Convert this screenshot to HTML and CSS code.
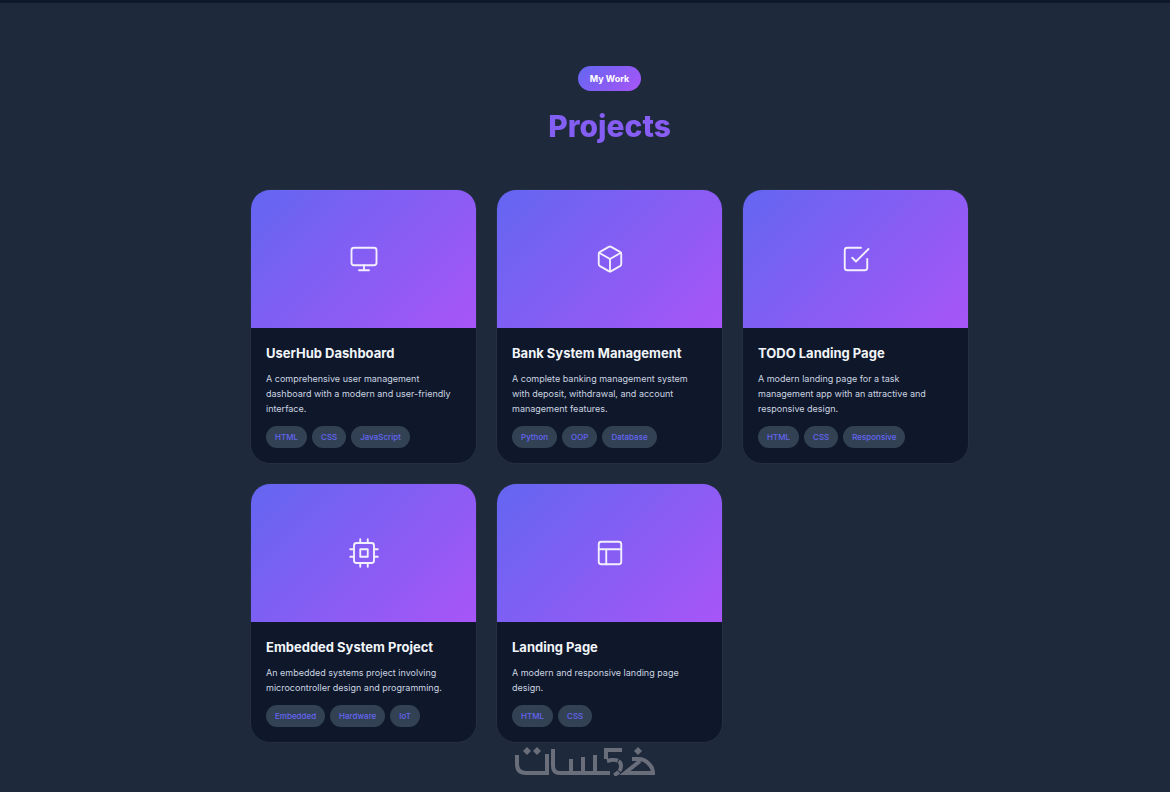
FILE: index.html
```html
<!DOCTYPE html>
<html lang="en">
<head>
<meta charset="utf-8">
<meta name="viewport" content="width=device-width, initial-scale=1">
<title>Projects</title>
<link rel="stylesheet" href="styles.css">
</head>
<body>
<main class="projects">
  <header class="section-header">
    <span class="section-badge">My Work</span>
    <h1 class="section-title">Projects</h1>
  </header>
  <div class="project-grid">
    <article class="card">
      <div class="card-image">
        <svg class="icon" viewBox="0 0 24 24" aria-hidden="true"><rect x="2" y="3" width="20" height="14" rx="2"/><path d="M8 21h8M12 17v4"/></svg>
      </div>
      <div class="card-body">
        <h2 class="card-title">UserHub Dashboard</h2>
        <p class="card-text">A comprehensive user management dashboard with a modern and user-friendly interface.</p>
        <ul class="tags"><li class="tag">HTML</li><li class="tag">CSS</li><li class="tag">JavaScript</li></ul>
      </div>
    </article>
    <article class="card">
      <div class="card-image">
        <svg class="icon" viewBox="0 0 24 24" aria-hidden="true"><path d="M21 16V8a2 2 0 0 0-1-1.73l-7-4a2 2 0 0 0-2 0l-7 4A2 2 0 0 0 3 8v8a2 2 0 0 0 1 1.73l7 4a2 2 0 0 0 2 0l7-4A2 2 0 0 0 21 16z"/><path d="M3.27 6.96 12 12.01l8.73-5.05M12 22.08V12"/></svg>
      </div>
      <div class="card-body">
        <h2 class="card-title">Bank System Management</h2>
        <p class="card-text">A complete banking management system with deposit, withdrawal, and account management features.</p>
        <ul class="tags"><li class="tag">Python</li><li class="tag">OOP</li><li class="tag">Database</li></ul>
      </div>
    </article>
    <article class="card">
      <div class="card-image">
        <svg class="icon" viewBox="0 0 24 24" aria-hidden="true"><path d="m9 11 3 3L22 4"/><path d="M21 12v7a2 2 0 0 1-2 2H5a2 2 0 0 1-2-2V5a2 2 0 0 1 2-2h11"/></svg>
      </div>
      <div class="card-body">
        <h2 class="card-title">TODO Landing Page</h2>
        <p class="card-text">A modern landing page for a task management app with an attractive and responsive design.</p>
        <ul class="tags"><li class="tag">HTML</li><li class="tag">CSS</li><li class="tag">Responsive</li></ul>
      </div>
    </article>
    <article class="card">
      <div class="card-image">
        <svg class="icon" viewBox="0 0 24 24" aria-hidden="true"><rect x="4" y="4" width="16" height="16" rx="2"/><rect x="9" y="9" width="6" height="6"/><path d="M9 1v3M15 1v3M9 20v3M15 20v3M20 9h3M20 15h3M1 9h3M1 15h3"/></svg>
      </div>
      <div class="card-body">
        <h2 class="card-title">Embedded System Project</h2>
        <p class="card-text">An embedded systems project involving microcontroller design and programming.</p>
        <ul class="tags"><li class="tag">Embedded</li><li class="tag">Hardware</li><li class="tag">IoT</li></ul>
      </div>
    </article>
    <article class="card">
      <div class="card-image">
        <svg class="icon" viewBox="0 0 24 24" aria-hidden="true"><rect x="3" y="3" width="18" height="18" rx="2"/><path d="M3 9h18M9 21V9"/></svg>
      </div>
      <div class="card-body">
        <h2 class="card-title">Landing Page</h2>
        <p class="card-text">A modern and responsive landing page design.</p>
        <ul class="tags"><li class="tag">HTML</li><li class="tag">CSS</li></ul>
      </div>
    </article>
  </div>
</main>
<svg class="watermark" viewBox="0 0 140 29" role="img" aria-label="خمسات">
  <g class="mark-stroke">
    <path d="M2 8v9q0 9 9 9h21V7"/>
    <path d="M38 2v17q0 7 7 7h50"/>
    <path d="M56 12v14M68 10v16M80 8v18"/>
    <path d="M117 12h6q7 0 11 5 4 4 4 9h-28l15-12"/>
  </g>
  <g class="mark-stroke">
    <path d="M107 3H91v9"/>
    <path class="mark-bowl" d="M92 14l4-1q10-1 10 6 0 6-7 9"/>
  </g>
  <path class="mark-fill" d="m12 0 4 4-4 4-4-4zM22 0l4 4-4 4-4-4zM123 0l4 4-4 4-4-4z"/>
</svg>
</body>
</html>
```
FILE: styles.css
```css
* {
  box-sizing: border-box;
  margin: 0;
  padding: 0;
}

body {
  min-height: 100vh;
  background: #1e293b;
  border-top: 3px solid #0f172a;
  color: #f1f5f9;
  font-family: Inter, "Liberation Sans", sans-serif;
  font-optical-sizing: none;
}

.projects {
  padding: 63px 0 50px 49px;
}

.section-header {
  display: flex;
  flex-direction: column;
  align-items: center;
  gap: 15px;
  margin-bottom: 43px;
}

.section-badge {
  padding: 5px 12px;
  border-radius: 13px;
  background: linear-gradient(135deg, #6366f1, #a855f7);
  color: #fff;
  font-size: 9px;
  font-weight: 700;
  line-height: 15px;
}

.section-title {
  align-self: stretch;
  background: linear-gradient(135deg, #6366f1, #a855f7);
  background-clip: text;
  color: transparent;
  font-size: 30px;
  font-weight: 800;
  line-height: 40px;
  text-align: center;
}

.project-grid {
  display: grid;
  grid-template-columns: repeat(3, 1fr);
  gap: 19px;
  max-width: 719px;
  margin: 0 auto;
}

.card {
  overflow: hidden;
  border: 1px solid #243042;
  border-radius: 20px;
  background: #0f172a;
}

.card-image {
  display: flex;
  align-items: center;
  justify-content: center;
  height: 138px;
  background: linear-gradient(135deg, #6366f1, #a855f7);
}

.icon {
  width: 30px;
  height: 30px;
  fill: none;
  stroke: #fff;
  stroke-width: 1.5;
  stroke-linecap: round;
  stroke-linejoin: round;
  opacity: 0.9;
}

.card-body {
  padding: 15px;
}

.card-title {
  margin-bottom: 8px;
  font-size: 13px;
  font-weight: 700;
  line-height: 20px;
}

.card-text {
  margin-bottom: 10px;
  color: #cbd5e1;
  font-size: 9px;
  line-height: 15px;
}

.tags {
  display: flex;
  flex-wrap: wrap;
  gap: 5px;
  list-style: none;
}

.tag {
  padding: 4px 9px;
  border-radius: 11px;
  background: #334155;
  color: #6366f1;
  font-size: 8px;
  font-weight: 500;
  line-height: 14px;
}

.watermark {
  position: fixed;
  bottom: 16px;
  left: 50%;
  width: 140px;
  height: 29px;
  transform: translateX(-50%);
}

.mark-stroke {
  fill: none;
  stroke: #6a6e7a;
  stroke-width: 4;
}

.mark-bowl {
  stroke-dasharray: 11 1;
}

.mark-fill {
  fill: #6a6e7a;
}
```
